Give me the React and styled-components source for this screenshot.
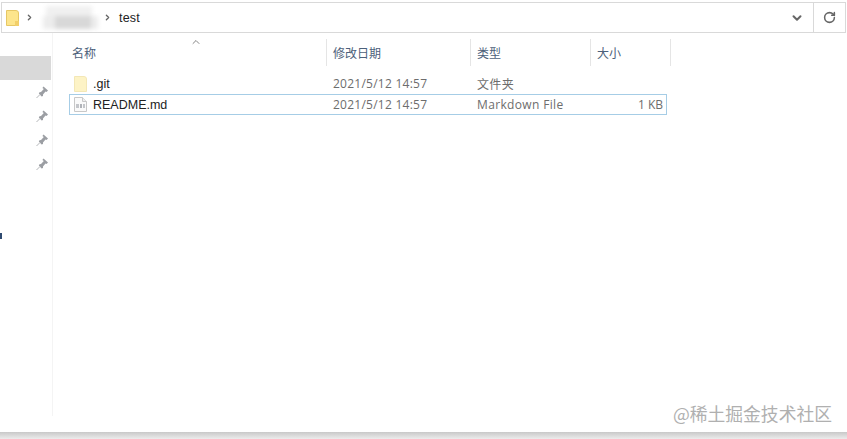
import React from 'react';
import styled, { createGlobalStyle } from 'styled-components';
import { ChevronDown, ChevronRight, ChevronUp, RotateCw } from 'lucide-react';

const GlobalStyle = createGlobalStyle`
  html, body {
    margin: 0;
    padding: 0;
    background: #fff;
  }
  body {
    font-family: "Noto Sans CJK SC", "Liberation Sans", sans-serif;
  }
`;

const Page = styled.div`
  width: 847px;
  height: 439px;
  display: flex;
  flex-direction: column;
  position: relative;
  overflow: hidden;
  background: #fff;
`;

const AddressBar = styled.div`
  height: 29px;
  margin: 2px 1px 0 1px;
  border: 1px solid #d9d9d9;
  display: flex;
  align-items: center;
  flex-shrink: 0;
`;

const Crumbs = styled.div`
  flex: 1;
  display: flex;
  align-items: center;
  padding-left: 4px;
`;

const CrumbArrow = styled(ChevronRight)`
  width: 9px;
  height: 9px;
  color: #666;
  stroke-width: 3.6;
  margin: ${(p) => p.$margin};
`;

const BlurredName = styled.div`
  width: 55px;
  height: 24px;
  display: flex;
  flex-direction: column;
  filter: blur(2px);
  margin-left: 9px;
`;

const BlurTop = styled.div`
  height: 10px;
  width: 46px;
  margin-left: 3px;
  background: #f0f0f0;
`;

const BlurBottom = styled.div`
  height: 13px;
  display: flex;
  background: #ececec;
`;

const BlurDark = styled.div`
  margin-left: 12px;
  width: 36px;
  background: #d8d8d8;
`;

const CrumbText = styled.span`
  font-family: "Liberation Sans", sans-serif;
  font-size: 12.5px;
  color: #222;
  letter-spacing: 0.2px;
`;

const BarButton = styled.div`
  width: ${(p) => p.$width}px;
  height: 100%;
  display: flex;
  align-items: center;
  justify-content: center;
  border-left: ${(p) => (p.$divided ? '1px solid #d9d9d9' : 'none')};
`;

const DropArrow = styled(ChevronDown)`
  width: 14px;
  height: 14px;
  color: #666;
  stroke-width: 3.4;
`;

const RefreshIcon = styled(RotateCw)`
  width: 13px;
  height: 13px;
  color: #666;
  stroke-width: 2.8;
`;

const Body = styled.div`
  flex: 1;
  display: flex;
  min-height: 0;
`;

const Sidebar = styled.div`
  width: 53px;
  height: 383px;
  flex-shrink: 0;
  border-right: 1px solid #f4f4f4;
  padding-top: 23px;
  box-sizing: border-box;
  position: relative;
`;

const SideSelected = styled.div`
  width: 51px;
  height: 24px;
  background: #d9d9d9;
`;

const PinList = styled.div`
  display: flex;
  flex-direction: column;
  align-items: flex-end;
  padding: 4px 3px 0 0;
  gap: 8px;
`;

const PinMark = styled.div`
  position: absolute;
  left: 0;
  top: 200px;
  width: 2px;
  height: 6px;
  background: #2f4a70;
`;

const Main = styled.div`
  flex: 1;
  display: flex;
  flex-direction: column;
  position: relative;
`;

const SortArrow = styled(ChevronUp)`
  position: absolute;
  left: 137px;
  top: 3px;
  width: 12px;
  height: 12px;
  color: #666;
  stroke-width: 1.6;
`;

const Grid = styled.div`
  display: grid;
  grid-template-columns: 274px 144px 120px 80px;
`;

const HeaderCell = styled.div`
  height: 27px;
  margin-top: 6px;
  display: flex;
  align-items: center;
  box-sizing: border-box;
  padding-left: ${(p) => p.$pad}px;
  border-right: 1px solid #e5e5e5;
  font-size: 12px;
  color: #4c607a;
`;

const Rows = styled.div`
  margin: 7px 0 0 16px;
  width: 598px;
  display: flex;
  flex-direction: column;
`;

const Row = styled.div`
  height: 21px;
  box-sizing: border-box;
  display: grid;
  grid-template-columns: 263px 144px 120px 1fr;
  align-items: center;
  font-size: 12.5px;
  color: #6d6d6d;
  border: 1px solid ${(p) => (p.$selected ? '#a6cde6' : 'transparent')};
`;

const NameCell = styled.div`
  display: flex;
  align-items: center;
  gap: 6px;
  padding-left: 4px;
  color: #222;
  font-family: "Liberation Sans", sans-serif;
  font-size: 12.5px;
`;

const DateCell = styled.div`
  font-family: "Open Sans", "Liberation Sans", sans-serif;
  font-size: 12px;
  letter-spacing: 0.25px;
`;

const TypeCell = styled.div`
  font-family: "Open Sans", "Noto Sans CJK SC", sans-serif;
  font-size: 12px;
  letter-spacing: 0.35px;
`;

const SizeCell = styled.div`
  font-family: "Open Sans", sans-serif;
  font-size: 12px;
  text-align: right;
  padding-right: 3px;
`;

const BottomBar = styled.div`
  position: absolute;
  left: 0;
  right: 0;
  bottom: 0;
  height: 7px;
  background: linear-gradient(#c8c8c8, #ececec);
`;

const Watermark = styled.div`
  position: absolute;
  right: 15px;
  top: 402px;
  font-size: 17.8px;
  line-height: 22px;
  color: #b0b0b0;
`;

const Pin = () => (
  <svg width="14" height="16" viewBox="0 0 14 16">
    <path d="M8.5 2.5 L13 6.5 L11.5 8 L10.5 7.5 L8 10.5 L8 12 L6.6 12.5 L3.8 9.6 L4.5 8.3 L6 8 L8.8 5 L7.4 4 Z" fill="#9b9ea3" />
    <path d="M5 10.5 L1.5 14" stroke="#b5b7ba" strokeWidth="1" />
  </svg>
);

const FolderIcon = ({ pale }) => (
  <svg width="13" height="16" viewBox="0 0 13 16">
    <path d="M0.5 0.5 H10 Q12.5 0.5 12.5 3 V15.5 H0.5 Z" fill={pale ? '#fdf3c6' : '#fde58c'} stroke={pale ? '#f3e7b6' : '#e6c765'} strokeWidth="1" />
    {!pale && <path d="M9 11 H13 V16 H9 Z" fill="#f2cf6a" />}
  </svg>
);

const FileIcon = () => (
  <svg width="13" height="15" viewBox="0 0 13 15">
    <path d="M0.5 0.5 H8.5 L12.5 4.5 V14.5 H0.5 Z" fill="#fafafa" stroke="#c8c8c8" />
    <path d="M8.5 0.5 V4.5 H12.5" fill="#eee" stroke="#c8c8c8" />
    <rect x="2" y="7" width="3" height="4" fill="#c4c6ca" />
    <rect x="6" y="7" width="2" height="4" fill="#b0b3b8" />
    <rect x="9" y="7" width="2" height="4" fill="#c4c6ca" />
  </svg>
);

const files = [
  { name: '.git', date: '2021/5/12 14:57', type: '文件夹', size: '', icon: <FolderIcon pale /> },
  { name: 'README.md', date: '2021/5/12 14:57', type: 'Markdown File', size: '1 KB', icon: <FileIcon />, selected: true },
];

const App = () => (
  <Page>
    <GlobalStyle />
    <AddressBar>
      <Crumbs>
        <FolderIcon />
        <CrumbArrow $margin="0 0 0 6px" />
        <BlurredName>
          <BlurTop />
          <BlurBottom>
            <BlurDark />
          </BlurBottom>
        </BlurredName>
        <CrumbArrow $margin="0 7px 0 5px" />
        <CrumbText>test</CrumbText>
      </Crumbs>
      <BarButton $width={32}>
        <DropArrow />
      </BarButton>
      <BarButton $width={31} $divided>
        <RefreshIcon />
      </BarButton>
    </AddressBar>
    <Body>
      <Sidebar>
        <SideSelected />
        <PinList>
          <Pin />
          <Pin />
          <Pin />
          <Pin />
        </PinList>
        <PinMark />
      </Sidebar>
      <Main>
        <SortArrow />
        <Grid>
          <HeaderCell $pad={19}>名称</HeaderCell>
          <HeaderCell $pad={6}>修改日期</HeaderCell>
          <HeaderCell $pad={6}>类型</HeaderCell>
          <HeaderCell $pad={6}>大小</HeaderCell>
        </Grid>
        <Rows>
          {files.map((f) => (
            <Row key={f.name} $selected={f.selected}>
              <NameCell>
                {f.icon}
                {f.name}
              </NameCell>
              <DateCell>{f.date}</DateCell>
              <TypeCell>{f.type}</TypeCell>
              <SizeCell>{f.size}</SizeCell>
            </Row>
          ))}
        </Rows>
      </Main>
    </Body>
    <Watermark>@稀土掘金技术社区</Watermark>
    <BottomBar />
  </Page>
);

export default App;
